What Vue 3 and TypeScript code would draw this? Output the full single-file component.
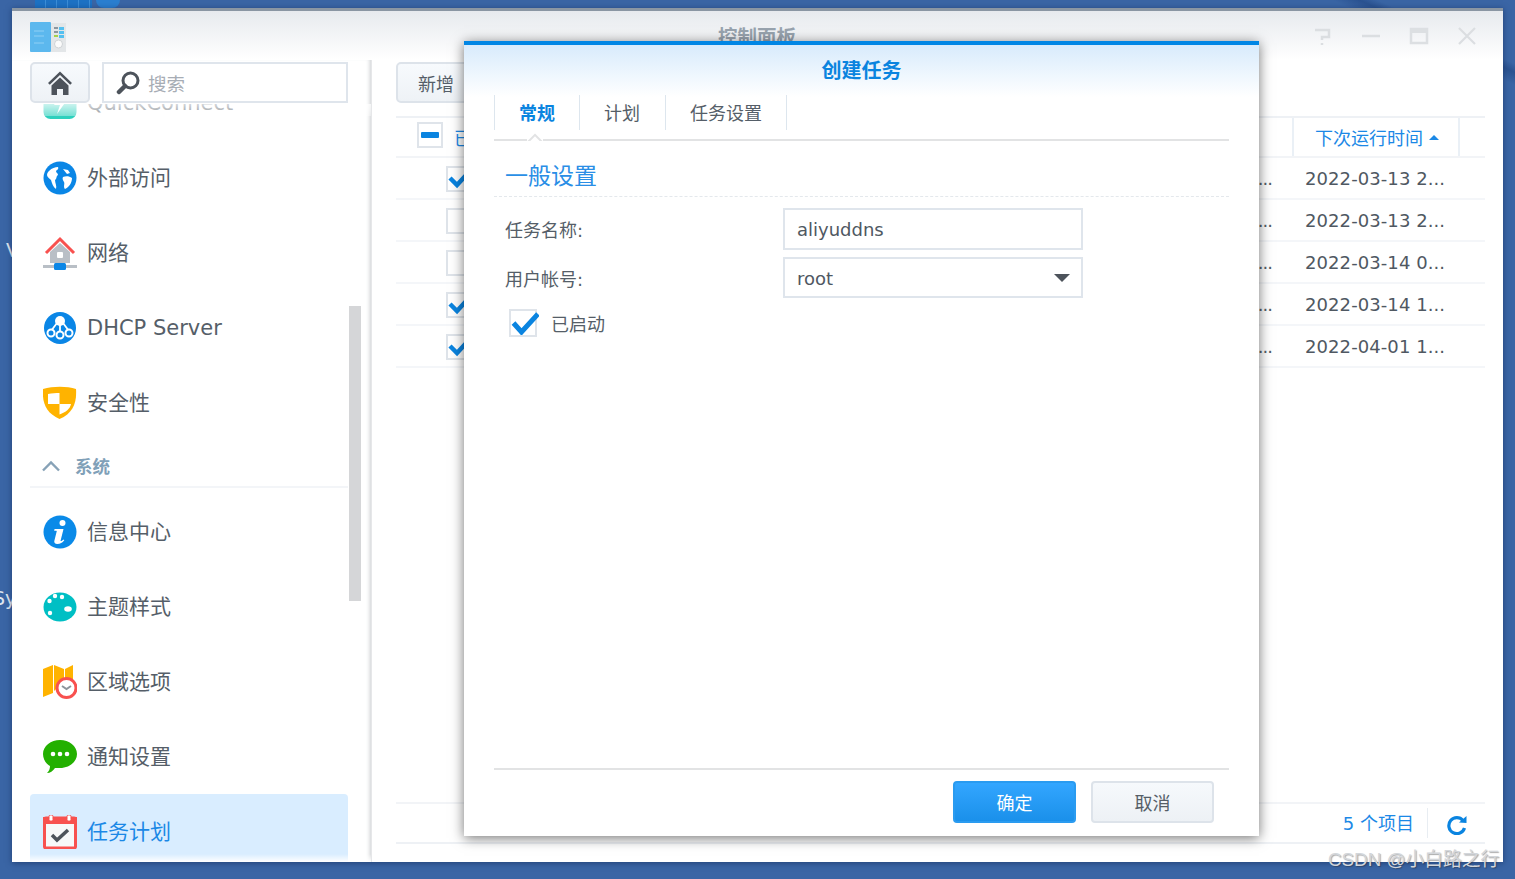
<script setup lang="ts">
interface NavItem { key: string; label: string; active?: boolean }
const groupA: NavItem[] = [
  { key: 'qc', label: 'QuickConnect' },
  { key: 'ext', label: '外部访问' },
  { key: 'net', label: '网络' },
  { key: 'dhcp', label: 'DHCP Server' },
  { key: 'sec', label: '安全性' },
]
const groupB: NavItem[] = [
  { key: 'info', label: '信息中心' },
  { key: 'theme', label: '主题样式' },
  { key: 'region', label: '区域选项' },
  { key: 'notify', label: '通知设置' },
  { key: 'task', label: '任务计划', active: true },
]
const rows = [
  { on: true, date: '2022-03-13 2...' },
  { on: false, date: '2022-03-13 2...' },
  { on: false, date: '2022-03-14 0...' },
  { on: true, date: '2022-03-14 1...' },
  { on: true, date: '2022-04-01 1...' },
]
const tabs = [
  { label: '常规', active: true },
  { label: '计划', active: false },
  { label: '任务设置', active: false },
]
</script>

<template>
  <div class="desktop">
    <div class="streak"></div>
    <div class="desk-icon"></div>
    <div class="desk-icon second"></div>
    <span class="desk-text v">V</span>
    <span class="desk-text sy">Sy</span>

    <div class="window">
      <header class="titlebar">
        <svg class="logo" width="36" height="30" viewBox="0 0 36 30">
          <rect x="0" y="0" width="21" height="30" rx="1" fill="#5cb8ee" />
          <rect x="21" y="1" width="15" height="29" fill="#e3e6e8" />
          <rect x="24" y="5" width="4" height="2" fill="#8c969f" />
          <rect x="29" y="5" width="5" height="3" fill="#55c0f0" />
          <rect x="24" y="9" width="4" height="2" fill="#8c969f" />
          <rect x="29" y="9" width="5" height="3" fill="#55c0f0" />
          <rect x="24" y="13" width="4" height="2" fill="#a6d24a" />
          <rect x="29" y="13" width="5" height="3" fill="#55c0f0" />
          <circle cx="28.500" cy="22" r="4" fill="#fbfbfb" stroke="#cfd3d6" />
          <path d="M4 9h10M4 14h10M4 21h10" stroke="#8fd0f5" stroke-width="1" />
        </svg>
        <span class="win-title">控制面板</span>
        <div class="win-controls">
          <svg width="20" height="20" viewBox="0 0 20 20"><path d="M2 4h14v7H9v3M9 17v2" fill="none" stroke="#dbdee1" stroke-width="2.500" /></svg>
          <svg width="20" height="20" viewBox="0 0 20 20"><path d="M1 10h18" stroke="#dbdee1" stroke-width="2.500" /></svg>
          <svg width="20" height="20" viewBox="0 0 20 20"><path d="M2 3h16v14H2z" fill="none" stroke="#dcdfe2" stroke-width="2.500" /><path d="M2 5h16" stroke="#dcdfe2" stroke-width="4" /></svg>
          <svg width="20" height="20" viewBox="0 0 20 20"><path d="M2 2l16 16M18 2L2 18" stroke="#dbdee1" stroke-width="2.200" /></svg>
        </div>
      </header>

      <div class="body">
        <aside class="sidebar">
          <div class="side-tools">
            <button class="home-btn">
              <svg width="26" height="26" viewBox="0 0 26 26">
                <path d="M13 1.500L1 13l1.800 1.800L13 5l10.200 9.800L25 13z" fill="#4d535b" />
                <path d="M4.500 15.500L13 7.500l8.500 8V25H16v-6h-6v6H4.500z" fill="#4d535b" />
              </svg>
            </button>
            <div class="search">
              <svg width="24" height="24" viewBox="0 0 24 24">
                <circle cx="14.500" cy="9.500" r="7.500" fill="none" stroke="#4d535b" stroke-width="3" />
                <path d="M9 15l-6 6" stroke="#4d535b" stroke-width="4.500" stroke-linecap="round" />
              </svg>
              <span>搜索</span>
            </div>
          </div>
          <div class="nav">
            <div class="nav-inner">
              <div v-for="item in groupA" :key="item.key" class="nav-item">
                <svg class="nav-icon" width="34" height="34" viewBox="0 0 34 34">
                  <template v-if="item.key === 'qc'">
                    <rect x="0.500" y="0" width="33" height="33" rx="7" fill="#2dd0bd" />
                    <path d="M20 5l-9 14h6l-3 9 10-14h-6z" fill="#fff" />
                  </template>
                  <template v-else-if="item.key === 'ext'">
                    <circle cx="17" cy="17" r="16.500" fill="#0a86e6" />
                    <path d="M6 10c3-3 6-4 9-4 1 2-1 3-2 4 0 2 2 2 2 4-2 1-1 4-3 5 0 3 2 6 1 9-3-2-4-6-5-9-2-2-4-3-4-5 0-2 1-3 2-4zM20 8l5 1 2 3-3 1zM20 16c3-1 6-1 9 1 0 5-3 9-7 11-2-2 0-5-1-7-1-2-2-3-1-5z" fill="#fff" />
                  </template>
                  <template v-else-if="item.key === 'net'">
                    <path d="M17 7L7 16v11h20V16z" fill="#b9bfc6" />
                    <path d="M3 17L17 3l14 14" fill="none" stroke="#f8514f" stroke-width="3" />
                    <rect x="14" y="16" width="6" height="6" rx="1" fill="#fff" />
                    <rect x="0" y="29" width="34" height="3" fill="#b9bfc6" />
                    <rect x="11" y="27" width="12" height="7" rx="1.500" fill="#0a86e6" />
                  </template>
                  <template v-else-if="item.key === 'dhcp'">
                    <circle cx="17" cy="17" r="16" fill="#0a86e6" />
                    <circle cx="17" cy="10" r="5" fill="#fff" />
                    <path d="M17 12v8M14 12l-6 8M20 12l6 8" stroke="#fff" stroke-width="1.800" />
                    <g fill="#0a86e6" stroke="#fff" stroke-width="2">
                      <circle cx="8" cy="22" r="3.500" />
                      <circle cx="17" cy="24" r="3.500" />
                      <circle cx="26" cy="22" r="3.500" />
                    </g>
                  </template>
                  <template v-else-if="item.key === 'sec'">
                    <path d="M0 3c10-3 24-3 33 0 1 14-3 24-16.500 30C3 27-1 17 0 3z" fill="#ffb300" />
                    <path d="M5 8c4-1 8-1 11.500-1v11H5zM16.500 18H28c-1 5-5 8-11.500 10.500z" fill="#fff" />
                  </template>
                </svg>
                <span class="nav-label">{{ item.label }}</span>
              </div>

              <div class="group-head">
                <svg width="20" height="12" viewBox="0 0 20 12"><path d="M2 10.500L10 2.500l8 8" fill="none" stroke="#87a2b7" stroke-width="2.400" /></svg>
                <span>系统</span>
              </div>

              <div v-for="item in groupB" :key="item.key" class="nav-item" :class="{ active: item.active }">
                <svg class="nav-icon" width="34" height="34" viewBox="0 0 34 34">
                  <template v-if="item.key === 'info'">
                    <circle cx="17" cy="17" r="16.500" fill="#0a8ae8" />
                    <circle cx="19.500" cy="8" r="3" fill="#fff" />
                    <path d="M11.500 14h9l-3 12c1 .3 2-.5 3-1.500l.8.8c-2 2.500-4 3.700-7 3.700-2.500 0-3.300-1.500-3-3l2.500-10c-.7-.3-1.500-.3-2.500 0z" fill="#fff" />
                  </template>
                  <template v-else-if="item.key === 'theme'">
                    <ellipse cx="17" cy="17" rx="16.500" ry="14.500" fill="#00bfc4" />
                    <g fill="#fff">
                      <ellipse cx="25" cy="19" rx="3.800" ry="2.800" />
                      <circle cx="6.500" cy="11" r="2.200" />
                      <circle cx="12" cy="6" r="2.200" />
                      <circle cx="19" cy="7" r="2.200" />
                      <circle cx="7" cy="23" r="2.200" />
                    </g>
                  </template>
                  <template v-else-if="item.key === 'region'">
                    <path d="M0 4l10-4v28L0 32zM11 0l10 4v12l-10 10zM22 4l8-4v14h-8z" fill="#ffb300" />
                    <circle cx="23.500" cy="23" r="9.500" fill="#fff" stroke="#f8514f" stroke-width="3" />
                    <path d="M19 21l4.500 3 4.500-3" fill="none" stroke="#8d949b" stroke-width="2" />
                  </template>
                  <template v-else-if="item.key === 'notify'">
                    <path d="M17 0c9 0 17 6 17 14S26 28 17 28c-2 0-4 0-5 0-2 3-5 5-8 5 2-2 3-4 3-7C3 24 0 19 0 14 0 6 8 0 17 0z" fill="#23b000" />
                    <circle cx="10" cy="14" r="2.300" fill="#fff" />
                    <circle cx="17" cy="14" r="2.300" fill="#fff" />
                    <circle cx="24" cy="14" r="2.300" fill="#fff" />
                  </template>
                  <template v-else-if="item.key === 'task'">
                    <rect x="1.500" y="3" width="31" height="30" rx="1.500" fill="#f7f8f9" stroke="#f8514f" stroke-width="3" />
                    <rect x="0" y="2" width="34" height="7" fill="#f8514f" />
                    <rect x="6" y="0" width="4" height="6" rx="1.500" fill="#fff" stroke="#f8514f" />
                    <rect x="24" y="0" width="4" height="6" rx="1.500" fill="#fff" stroke="#f8514f" />
                    <path d="M9 20l5 5 11-10" fill="none" stroke="#4d535b" stroke-width="3.500" />
                  </template>
                </svg>
                <span class="nav-label">{{ item.label }}</span>
              </div>
            </div>
            <div class="nav-top-fade"></div>
            <div class="nav-fade"></div>
          </div>
          <div class="scroll-thumb"></div>
        </aside>

        <main class="main">
          <div class="main-tools"><button class="add-btn">新增</button></div>
          <div class="table">
            <div class="t-head">
              <div class="head-first">
                <span class="box minus"><i></i></span>
                <span class="head-enabled">已启动</span>
              </div>
              <div class="head-date">下次运行时间<b class="caret"></b></div>
              <div></div>
            </div>
            <div v-for="(r, i) in rows" :key="i" class="t-row">
              <div class="row-first">
                <span class="box row-box">
                  <svg v-if="r.on" width="24" height="20" viewBox="0 0 24 20"><path d="M3 9l7 7L22 3" fill="none" stroke="#0a84e0" stroke-width="4.500" /></svg>
                </span>
                <span class="dots">...</span>
              </div>
              <div class="row-date">{{ r.date }}</div>
              <div></div>
            </div>
          </div>
          <div class="t-foot">
            <span class="count">5 个项目</span>
            <span class="foot-sep"></span>
            <svg class="refresh" width="20" height="20" viewBox="0 0 20 20">
              <path d="M16 5.500A8 8 0 1 0 17.500 13" fill="none" stroke="#0a84e0" stroke-width="3.200" />
              <path d="M12 7.500L19.500 8V1z" fill="#0a84e0" />
            </svg>
          </div>
        </main>
      </div>
    </div>

    <section class="dialog">
      <h2 class="dlg-title">创建任务</h2>
      <div class="dlg-body">
        <nav class="tabs">
          <span v-for="t in tabs" :key="t.label" class="tab" :class="{ on: t.active }">{{ t.label }}</span>
          <i class="notch"></i>
        </nav>
        <h3 class="sec-title">一般设置</h3>
        <div class="form-row first">
          <label>任务名称:</label>
          <div class="field">aliyuddns</div>
        </div>
        <div class="form-row second">
          <label>用户帐号:</label>
          <div class="field select">root<b class="arrow"></b></div>
        </div>
        <div class="check-row">
          <span class="box dlg-box">
            <svg width="28" height="24" viewBox="0 0 28 24"><path d="M2.500 12l8 9L27 3" fill="none" stroke="#0a84e0" stroke-width="5" /></svg>
          </span>
          <span>已启动</span>
        </div>
        <div class="spacer"></div>
        <div class="dlg-foot">
          <button class="btn primary">确定</button>
          <button class="btn">取消</button>
        </div>
      </div>
    </section>

    <span class="watermark">CSDN @小白路之行</span>
  </div>
</template>

<style>
html, body { margin: 0; padding: 0; overflow: hidden; }
</style>

<style scoped>
.desktop {
  position: relative;
  width: 1515px;
  height: 879px;
  overflow: hidden;
  background: #3a65a5;
  font-family: "DejaVu Sans", "Noto Sans CJK SC", sans-serif;
  color: #555e68;
}
.streak {
  position: absolute;
  right: 0;
  top: 0;
  width: 200px;
  height: 120px;
  background: linear-gradient(205deg, transparent 30%, rgba(24, 60, 120, .45) 34%, transparent 40%, transparent 60%, rgba(24, 60, 120, .3) 64%, transparent 70%);
}
.desk-icon {
  position: absolute;
  left: 35px;
  top: 0;
  width: 57px;
  height: 8px;
  background: repeating-linear-gradient(90deg, #1d72c4 0 10px, #3b8ed8 10px 11px);
}
.desk-icon.second { left: 96px; width: 24px; background: #2a7fd0; border-radius: 0 0 8px 8px; }
.desk-text { position: absolute; color: #dfe6f0; font-size: 19px; line-height: 22px; }
.v { left: 6px; top: 239px; }
.sy { left: -7px; top: 587px; }

.window {
  position: absolute;
  left: 12px;
  top: 8px;
  width: 1491px;
  height: 854px;
  display: flex;
  flex-direction: column;
  background: #fff;
  box-shadow: 0 1px 6px rgba(10, 30, 70, .5);
}
.titlebar {
  height: 49px;
  flex: none;
  border-top: 3px solid #8a96a3;
  background: linear-gradient(#e7eaee, #fff);
  display: flex;
  align-items: center;
  position: relative;
}
.logo { margin: 3px 0 0 18px; }
.win-title {
  position: absolute;
  left: 706px;
  top: 14px;
  font-size: 19.500px;
  line-height: 26px;
  font-weight: 700;
  color: #98a3ae;
}
.win-controls {
  position: absolute;
  right: 26px;
  top: 15px;
  display: flex;
  gap: 28px;
}

.body { flex: 1; display: flex; min-height: 0; }
.sidebar {
  width: 360px;
  flex: none;
  position: relative;
  display: flex;
  flex-direction: column;
  border-right: 1px solid #e6e7e9;
  box-shadow: inset -4px 0 4px -3px #c9cccf;
  box-sizing: border-box;
  height: 802px;
}
.side-tools {
  display: flex;
  gap: 12px;
  padding: 2px 0 0 18px;
  height: 42px;
  flex: none;
  position: relative;
  z-index: 2;
}
.home-btn {
  width: 60px;
  height: 41px;
  padding: 0;
  border: 2px solid #dde3ea;
  border-radius: 5px;
  background: linear-gradient(#f7fafd, #eef2f6);
  display: flex;
  align-items: center;
  justify-content: center;
}
.search {
  width: 246px;
  height: 41px;
  box-sizing: border-box;
  border: 2px solid #dfe5ec;
  background: #fff;
  display: flex;
  align-items: center;
  gap: 8px;
  padding-left: 12px;
  font-size: 18.500px;
  color: #a7adb5;
}
.nav { flex: 1; overflow: hidden; position: relative; min-height: 0; padding-left: 18px; }
.nav-inner { margin-top: -39px; width: 318px; }
.nav-item {
  height: 75px;
  display: flex;
  align-items: center;
  padding-left: 13px;
  gap: 10px;
  border-radius: 4px;
}
.nav-item.active { background: #d9edff; color: #1b88e6; }
.nav-icon { flex: none; }
.nav-label { font-size: 21px; line-height: 28px; white-space: nowrap; }
.group-head {
  height: 41px;
  padding-top: 5px;
  border-bottom: 2px solid #f3f5f8;
  box-sizing: content-box;
  margin-bottom: 6px;
  display: flex;
  align-items: center;
  padding-left: 11px;
  gap: 14px;
  font-size: 17.500px;
  font-weight: 700;
  color: #80a0b8;
}
.nav-top-fade {
  position: absolute;
  left: 0;
  right: 0;
  top: 0;
  height: 12px;
  background: linear-gradient(rgba(255, 255, 255, .75), rgba(255, 255, 255, .35));
}
.nav-fade {
  position: absolute;
  left: 0;
  right: 0;
  bottom: 0;
  height: 8px;
  background: linear-gradient(rgba(255, 255, 255, 0), #fff);
}
.scroll-thumb {
  position: absolute;
  left: 337px;
  top: 246px;
  width: 12px;
  height: 295px;
  background: #d5d6d8;
}

.main { flex: 1; display: flex; flex-direction: column; padding: 0 18px 0 24px; min-width: 0; }
.main-tools { height: 44px; padding-top: 2px; flex: none; box-sizing: border-box; }
.add-btn {
  width: 100px;
  height: 41px;
  border: 2px solid #dde3ea;
  border-radius: 5px;
  background: linear-gradient(#f7fafd, #eef2f6);
  font: inherit;
  font-size: 18px;
  color: #555e68;
  text-align: left;
  padding: 0 0 0 20px;
}
.table { margin-top: 12px; flex: 1; }
.t-head, .t-row {
  display: grid;
  grid-template-columns: 896px 168px 25px;
  box-sizing: border-box;
}
.t-head { height: 42px; border-top: 2px solid #eef1f5; border-bottom: 2px solid #f2f4f7; }
.t-row { height: 42px; border-bottom: 2px solid #f4f6f9; }
.head-first { display: flex; align-items: center; padding-left: 21px; gap: 11px; }
.box {
  box-sizing: border-box;
  display: flex;
  align-items: center;
  justify-content: center;
  flex: none;
  width: 26px;
  height: 26px;
  border: 2px solid #dfe4ea;
  background: #fff;
}
.minus { margin-bottom: 4px; }
.minus i { width: 18px; height: 6px; background: #0a84e0; border-radius: 1px; }
.head-enabled { color: #1b88e6; font-size: 18px; }
.head-date {
  border-left: 2px solid #eaf0f6;
  border-right: 2px solid #eaf0f6;
  display: flex;
  align-items: center;
  padding-left: 21px;
  color: #1b88e6;
  font-size: 18px;
  white-space: nowrap;
}
.caret {
  margin-left: 6px;
  width: 0;
  height: 0;
  border: 5px solid transparent;
  border-top: 0;
  border-bottom: 5px solid #1b88e6;
}
.row-first { display: flex; align-items: center; justify-content: space-between; padding: 0 20px 0 50px; }
.row-box svg { flex: none; }
.dots { font-size: 18px; line-height: 24px; letter-spacing: -1px; }
.row-date { padding-left: 13px; font-size: 18px; line-height: 42px; letter-spacing: .08px; white-space: nowrap; color: #4f5862; }
.t-foot {
  height: 42px;
  flex: none;
  margin-bottom: 18px;
  box-sizing: border-box;
  border-top: 2px solid #f2f4f7;
  border-bottom: 2px solid #eef1f5;
  display: flex;
  align-items: center;
  justify-content: flex-end;
  padding-right: 18px;
  color: #1b88e6;
  font-size: 18px;
}
.count { margin-bottom: 2px; }
.refresh { margin-top: 4px; }
.foot-sep { width: 1px; height: 30px; background: #e8edf2; margin: 0 19px 0 13px; }

.dialog {
  position: absolute;
  left: 464px;
  top: 41px;
  width: 795px;
  height: 795px;
  box-sizing: border-box;
  border-top: 4px solid #0086e5;
  background: linear-gradient(#d8ebfc 0, #fff 52px);
  box-shadow: 0 2px 12px rgba(0, 0, 0, .55);
  display: flex;
  flex-direction: column;
}
.dlg-title {
  margin: 0;
  height: 50px;
  flex: none;
  font-size: 20px;
  line-height: 52px;
  font-weight: 700;
  text-align: center;
  color: #0a84df;
}
.dlg-body { flex: 1; display: flex; flex-direction: column; padding: 0 30px; min-height: 0; }
.tabs {
  position: relative;
  height: 46px;
  flex: none;
  box-sizing: border-box;
  border-bottom: 2px solid #e2e3e4;
  display: flex;
  align-items: flex-start;
}
.tab {
  height: 35px;
  line-height: 37px;
  padding: 0 24px;
  border-left: 1px solid #dde6ee;
  font-size: 18px;
  white-space: nowrap;
}
.tab:nth-child(2) { padding-right: 25px; }
.tab:nth-child(3) { border-right: 1px solid #dde6ee; }
.tab.on { color: #0a84df; font-weight: 700; }
.notch {
  position: absolute;
  left: 33px;
  bottom: -2px;
  width: 16px;
  height: 8px;
  background: #fff;
  overflow: hidden;
}
.notch::before {
  content: "";
  position: absolute;
  left: 2px;
  top: 3px;
  width: 12px;
  height: 12px;
  transform: rotate(45deg);
  border: 2px solid #e2e3e4;
  box-sizing: border-box;
  background: #fff;
}
.sec-title {
  margin: 0;
  padding: 18px 0 0 11px;
  height: 56px;
  box-sizing: border-box;
  flex: none;
  border-bottom: 1px dashed #e4e8ec;
  font-size: 23px;
  line-height: 34px;
  font-weight: 400;
  color: #2a8ee6;
}
.form-row { display: flex; align-items: center; height: 42px; flex: none; }
.form-row.first { margin-top: 11px; }
.form-row.second { margin-top: 7px; height: 41px; }
.form-row label { width: 289px; padding-left: 11px; box-sizing: border-box; font-size: 18px; }
.field {
  width: 300px;
  height: 42px;
  box-sizing: border-box;
  border: 2px solid #dfe5ec;
  padding-left: 12px;
  font-size: 18px;
  line-height: 40px;
  color: #4f5862;
  position: relative;
}
.field.select { height: 41px; line-height: 39px; }
.arrow {
  position: absolute;
  right: 11px;
  top: 15px;
  width: 0;
  height: 0;
  border: 8px solid transparent;
  border-bottom: 0;
  border-top: 8px solid #4d535b;
}
.check-row { display: flex; align-items: center; gap: 14px; margin: 10px 0 0 15px; font-size: 18px; height: 29px; flex: none; }
.dlg-box { width: 28px; height: 28px; overflow: visible; justify-content: flex-start; }
.dlg-box svg { flex: none; margin-right: -4px; }
.spacer { flex: 1; }
.dlg-foot {
  height: 68px;
  flex: none;
  border-top: 2px solid #e2e3e4;
  box-sizing: border-box;
  display: flex;
  justify-content: flex-end;
  align-items: flex-start;
  padding: 11px 15px 0 0;
  gap: 15px;
}
.btn {
  width: 123px;
  height: 42px;
  padding: 0;
  border: 2px solid #dde3ea;
  border-radius: 4px;
  background: linear-gradient(#f6f9fc, #edf1f5);
  font: inherit;
  font-size: 18px;
  color: #555e68;
}
.btn.primary {
  border-color: #2a9bf0;
  background: linear-gradient(#33a6ff, #1a90ea);
  color: #fff;
}
.watermark {
  position: absolute;
  left: 1328px;
  top: 847px;
  font-family: "Liberation Sans", "Noto Sans CJK SC", sans-serif;
  font-size: 18.800px;
  line-height: 26px;
  color: #d3d6da;
  text-shadow: 1px 1px 1px rgba(40, 40, 40, .4);
  white-space: nowrap;
}
</style>
